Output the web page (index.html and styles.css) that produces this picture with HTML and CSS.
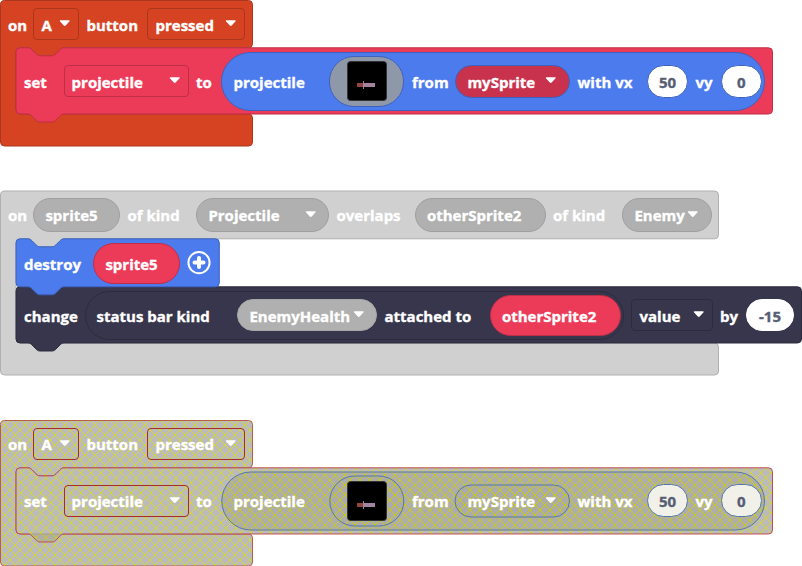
FILE: index.html
```
<!DOCTYPE html>
<html lang="en">
<head>
<meta charset="utf-8">
<title>Blocks workspace</title>
<link rel="stylesheet" href="styles.css">
</head>
<body>
<svg class="defs" width="0" height="0" aria-hidden="true">
  <defs>
    <pattern id="hatch" patternUnits="userSpaceOnUse" width="10" height="10">
      <rect width="10" height="10" fill="#aaa"/>
      <path d="M-1 -1L11 11M11 -1L-1 11" stroke="#cc0"/>
    </pattern>
    <path id="event" d="M.5 4.5a4 4 0 0 1 4-4H248.5a4 4 0 0 1 4 4V43.8a4 4 0 0 1-4 4H64c-2 0-3 1-4 2l-4 4c-1 1-2 2-4 2H40c-2 0-3-1-4-2l-4-4c-1-1-2-2-4-2H20a4 4 0 0 0-4 4V110a4 4 0 0 0 4 4H248.5a4 4 0 0 1 4 4V142a4 4 0 0 1-4 4H4.5a4 4 0 0 1-4-4Z"/>
    <path id="setter" d="M0 4a4 4 0 0 1 4-4H12c2 0 3 1 4 2l4 4c1 1 2 2 4 2h12c2 0 3-1 4-2l4-4c1-1 2-2 4-2H752.5a4 4 0 0 1 4 4V62.2a4 4 0 0 1-4 4H48c-2 0-3 1-4 2l-4 4c-1 1-2 2-4 2H24c-2 0-3-1-4-2l-4-4c-1-1-2-2-4-2H4a4 4 0 0 1-4-4Z"/>
    <symbol id="arrow" viewBox="0 0 12 8"><path d="M2 1H10Q12 1 10.8 2.4L7.2 6.4Q6 7.6 4.8 6.4L1.2 2.4Q0 1 2 1Z" fill="#fff"/></symbol>
  </defs>
</svg>
<main class="workspace">

  <section class="script button-event">
    <svg class="shape" width="802" height="147">
      <use href="#event" class="orange"/>
      <use href="#setter" class="red" x="16" y="47.8"/>
    </svg>
    <div class="row head cols-event">
      <span>on</span>
      <span class="field">A<svg class="arrow"><use href="#arrow"/></svg></span>
      <span class="after">button</span>
      <span class="field">pressed<svg class="arrow"><use href="#arrow"/></svg></span>
    </div>
    <div class="row set cols-set">
      <span>set</span>
      <span class="field">projectile<svg class="arrow"><use href="#arrow"/></svg></span>
      <span class="after">to</span>
      <div class="reporter cols-projectile">
        <span>projectile</span>
        <span class="pill image"><svg width="40" height="40"><rect x=".5" y=".5" width="39" height="39" rx="3" fill="#000" stroke="#333"/><path d="M10 22h6v4h-6z" fill="#91463d"/><path d="M16 20h1v8h-1zM17 22h11v4H17z" fill="#a4839f"/></svg></span>
        <span class="after">from</span>
        <span class="pill variable">mySprite<svg class="arrow"><use href="#arrow"/></svg></span>
        <span class="after">with vx</span>
        <span class="pill number">50</span>
        <span class="after">vy</span>
        <span class="pill number">0</span>
      </div>
    </div>
  </section>

  <section class="script overlap-event">
    <svg class="shape" width="802" height="187">
      <path class="grey" d="M.5 5a4 4 0 0 1 4-4H714.5a4 4 0 0 1 4 4V44.8a4 4 0 0 1-4 4H64c-2 0-3 1-4 2l-4 4c-1 1-2 2-4 2H40c-2 0-3-1-4-2l-4-4c-1-1-2-2-4-2H20a4 4 0 0 0-4 4V149a4 4 0 0 0 4 4H714.5a4 4 0 0 1 4 4V181a4 4 0 0 1-4 4H4.5a4 4 0 0 1-4-4Z"/>
      <path class="dark" transform="translate(16 96.8)" d="M0 4a4 4 0 0 1 4-4H781.5a4 4 0 0 1 4 4V52.2a4 4 0 0 1-4 4H48c-2 0-3 1-4 2l-4 4c-1 1-2 2-4 2H24c-2 0-3-1-4-2l-4-4c-1-1-2-2-4-2H4a4 4 0 0 1-4-4Z"/>
      <path class="blue" transform="translate(16 48.8)" d="M0 4a4 4 0 0 1 4-4H12c2 0 3 1 4 2l4 4c1 1 2 2 4 2h12c2 0 3-1 4-2l4-4c1-1 2-2 4-2H199.3a4 4 0 0 1 4 4V44a4 4 0 0 1-4 4H48c-2 0-3 1-4 2l-4 4c-1 1-2 2-4 2H24c-2 0-3-1-4-2l-4-4c-1-1-2-2-4-2H4a4 4 0 0 1-4-4Z"/>
    </svg>
    <div class="row head cols-overlap">
      <span>on</span>
      <span class="pill muted">sprite5</span>
      <span class="after">of kind</span>
      <span class="pill muted">Projectile<svg class="arrow"><use href="#arrow"/></svg></span>
      <span class="after">overlaps</span>
      <span class="pill muted">otherSprite2</span>
      <span class="after">of kind</span>
      <span class="pill muted">Enemy<svg class="arrow"><use href="#arrow"/></svg></span>
    </div>
    <div class="row destroy cols-destroy">
      <span>destroy</span>
      <span class="pill value">sprite5</span>
      <svg class="plus" width="24" height="24"><circle cx="12" cy="11.6" r="10.6" fill="none" stroke="#fff" stroke-width="2"/><path d="M12 7.1V16.1M7.5 11.6H16.5" stroke="#fff" stroke-width="4" stroke-linecap="round"/></svg>
    </div>
    <div class="row change cols-change">
      <span>change</span>
      <div class="reporter status cols-status">
        <span>status bar kind</span>
        <span class="pill kind">EnemyHealth<svg class="arrow"><use href="#arrow"/></svg></span>
        <span class="after">attached to</span>
        <span class="pill value">otherSprite2</span>
      </div>
      <span class="field">value<svg class="arrow"><use href="#arrow"/></svg></span>
      <span class="after">by</span>
      <span class="pill number">-15</span>
    </div>
  </section>

  <section class="script button-event disabled">
    <svg class="shape" width="802" height="147">
      <use href="#event" class="orange"/>
      <use href="#setter" class="red" x="16" y="47.8"/>
      <rect class="blue" x="221.8" y="52" width="542.7" height="58" rx="29"/>
      <rect class="blue" x="329.8" y="56" width="74" height="50" rx="25"/>
      <rect class="blue" x="455" y="65" width="114.5" height="32" rx="16"/>
    </svg>
    <div class="row head cols-event">
      <span>on</span>
      <span class="field">A<svg class="arrow"><use href="#arrow"/></svg></span>
      <span class="after">button</span>
      <span class="field">pressed<svg class="arrow"><use href="#arrow"/></svg></span>
    </div>
    <div class="row set cols-set">
      <span>set</span>
      <span class="field">projectile<svg class="arrow"><use href="#arrow"/></svg></span>
      <span class="after">to</span>
      <div class="reporter cols-projectile">
        <span>projectile</span>
        <span class="pill image"><svg width="40" height="40"><rect x=".5" y=".5" width="39" height="39" rx="3" fill="#000" stroke="#333"/><path d="M10 22h6v4h-6z" fill="#91463d"/><path d="M16 20h1v8h-1zM17 22h11v4H17z" fill="#a4839f"/></svg></span>
        <span class="after">from</span>
        <span class="pill variable">mySprite<svg class="arrow"><use href="#arrow"/></svg></span>
        <span class="after">with vx</span>
        <span class="pill number">50</span>
        <span class="after">vy</span>
        <span class="pill number">0</span>
      </div>
    </div>
  </section>
</main>
</body>
</html>
```
FILE: styles.css
```
* { box-sizing: border-box; }
body {
  margin: 0;
  background: #fff;
  color: #fff;
  font: 700 15px/22px "Open Sans", "Noto Sans", sans-serif;
  -webkit-text-stroke: .35px;
  overflow: hidden;
}
.defs { position: absolute; }
.workspace { display: flex; flex-direction: column; width: 802px; height: 566px; overflow: hidden; }
.script { position: relative; flex: none; }
.shape { position: absolute; left: 0; top: 0; z-index: -1; overflow: visible; }
.button-event { height: 146px; }
.overlap-event { height: 185px; margin: 44px 0 44.5px; }
.row, .reporter { display: grid; align-items: center; white-space: nowrap; }
.row { padding-left: 8px; }
.row > span:not(.field, .pill), .reporter > span:not(.pill) { padding-top: 1.5px; }
.after { padding-left: 7.5px; }
.head { height: 48px; }
.set { height: 66px; padding-left: 24px; }

.cols-event { grid-template-columns: 25px 46px 68px 98px; }
.cols-set { grid-template-columns: 39.6px 125px 32.9px 543.5px; }
.cols-projectile { grid-template-columns: 96px 75px 50.5px 115px 77px 41px 32.8px 41px; }
.cols-overlap { grid-template-columns: 25px 87px 76px 133px 85.5px 131px 76.5px 89.5px; }
.cols-destroy { grid-template-columns: 69px 87px 7px 24px; }
.cols-change { grid-template-columns: 60.5px 539.5px 7px 81.5px 33.5px 48px; }
.cols-status { grid-template-columns: 140.5px 140px 112.5px 131px; }

.field, .pill { display: flex; align-items: center; border: 1px solid; padding: 1.5px 8px 0 7.5px; height: 32px; }
.field { border-color: #aa361b; border-radius: 4px; }
.set .field { border-color: #bd2f47; padding-left: 7px; }
.pill { border-radius: 25px; padding: 1.5px 12px 0 11.4px; }
.arrow { width: 11.5px; height: 8px; margin: -3px 0 0 auto; flex: none; }
.field .arrow { margin-right: -.5px; }

.reporter { height: 59px; border: 1px solid #3c62bd; border-radius: 30px; background: #4b7bec; padding-left: 11px; }
.image { height: 51px; padding: 0 16px 0 16.5px; background: #8f98a8; border-color: #3c62bd; }
.image svg { flex: none; }
.variable { height: 33px; background: #c8324c; border-color: #3c62bd; }
.number { height: 33px; background: #fff; color: #575e75; border-color: #3c62bd; justify-content: center; padding: 1.5px 0 0; }

.overlap-event .head { height: 49px; }
.muted { height: 34px; background: #b0b0b0; border-color: #a0a0a0; }
.destroy { height: 48px; padding-left: 24px; }
.value { height: 41px; background: #ec3b59; border-color: #bd2f47; }
.plus { grid-column: 4; }
.change { height: 56px; padding-left: 24px; }
.status { height: 49px; background: none; border-color: #2d2b3e; }
.kind { height: 32px; background: #b0b0b0; border-color: #a7a7a7; }
.change .field { grid-column: 4; border-color: #2d2b3e; }
.change .number { height: 32px; border-color: #fff; }

.orange { fill: #d54322; stroke: #aa361b; }
.red { fill: #ec3b59; stroke: #bd2f47; }
.blue { fill: #4b7bec; stroke: #3c62bd; }
.grey { fill: #d0d0d0; stroke: #b0b0b0; }
.dark { fill: #38364d; stroke: #2d2b3e; }

.disabled .orange, .disabled .red, .disabled .blue { fill: url(#hatch); fill-opacity: .8; }
.disabled .orange { stroke: #b85e4b; }
.disabled .red { stroke: #bd4f5a; }
.disabled .blue { stroke: #5476ac; }
.disabled .reporter, .disabled .image, .disabled .variable { background: none; border-color: transparent; }
.disabled .number { background: #f1f0e9; border-color: #5476ac; }
.disabled .field { border-color: #aa2b20; }
```
